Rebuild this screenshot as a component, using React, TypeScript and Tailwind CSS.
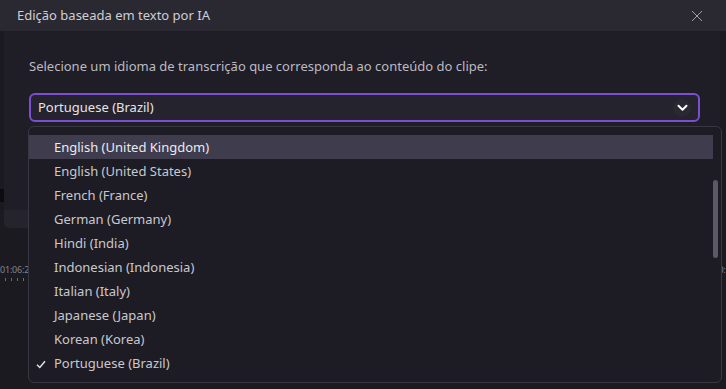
import React from 'react';

const LANGS = [
  'English (United Kingdom)',
  'English (United States)',
  'French (France)',
  'German (Germany)',
  'Hindi (India)',
  'Indonesian (Indonesia)',
  'Italian (Italy)',
  'Japanese (Japan)',
  'Korean (Korea)',
  'Portuguese (Brazil)',
];

const HOVERED = 'English (United Kingdom)';
const SELECTED = 'Portuguese (Brazil)';

const Ticks: React.FC = () => (
  <div className="flex gap-[5px] pl-[5px] mt-[4px]">
    {[0, 1, 2, 3].map((i) => (
      <span key={i} className="w-px h-[3px] bg-[#6d6b74]" />
    ))}
  </div>
);

const App: React.FC = () => {
  return (
    <div
      className="relative w-[726px] h-[389px] overflow-hidden bg-[#1b1a21] flex flex-col"
      style={{ fontFamily: '"Noto Sans", "Open Sans", sans-serif' }}
    >
      {/* Title bar */}
      <div className="h-[31px] shrink-0 flex items-center justify-between pl-[17px] pr-[23px] bg-[#2a2831]">
        <span className="text-[13px] text-[#cfced4] leading-none">Edição baseada em texto por IA</span>
        <svg width="12" height="12" viewBox="0 0 12 12" className="text-[#9f9ea6]">
          <path d="M1 1 L11 11 M11 1 L1 11" stroke="currentColor" strokeWidth="1" fill="none" />
        </svg>
      </div>

      {/* Dialog body */}
      <div className="h-[197px] shrink-0 flex">
        <div className="w-[4px] flex flex-col">
          <div className="h-[158px]" />
          <div className="h-[13px] bg-[#0c0b10]" />
        </div>
        <div className="flex-1 flex flex-col bg-[#1f1d26]">
          <div className="flex-1 pl-[25px] pr-[20px] pt-[26px]">
            <p className="text-[13px] leading-[18px] text-[#bcbbc2]">
              Selecione um idioma de transcrição que corresponda ao conteúdo do clipe:
            </p>
            <div className="mt-[18px] h-[29px] rounded-[6px] border-2 border-[#7b4fd3] bg-[#25232d] flex items-center justify-between pl-[7px] pr-[7px]">
              <span className="text-[13px] text-[#e6e5ea]">Portuguese (Brazil)</span>
              <span className="w-[18px] h-[18px] rounded-full bg-[#2a2832] flex items-center justify-center">
                <svg width="11" height="8" viewBox="0 0 11 8">
                  <path d="M1.5 1.8 L5.5 5.8 L9.5 1.8" stroke="#ffffff" strokeWidth="2" fill="none" strokeLinecap="round" strokeLinejoin="round" />
                </svg>
              </span>
            </div>
          </div>
          <div className="h-[18px] bg-[#25232c] rounded-b-[6px]" />
        </div>
        <div className="w-[6px]" />
      </div>

      {/* App timeline behind */}
      <div className="flex-1 flex justify-between pt-[37px]">
        <div>
          <div className="text-[9px] leading-none text-[#85848b] tracking-[-0.2px]">01:06:2</div>
          <Ticks />
        </div>
        <div>
          <div className="text-[9px] leading-none text-[#85848b]">0:</div>
        </div>
      </div>

      {/* Dropdown list */}
      <div className="absolute left-[28px] top-[126px] w-[694px] h-[257px] rounded-[6px] border border-[#393742] bg-[#1d1c24] pt-[8px] pr-[8px]">
        {LANGS.map((l) => {
          const hover = l === HOVERED;
          const sel = l === SELECTED;
          return (
            <div
              key={l}
              className={`h-[24px] flex items-center pt-[2px] text-[13px] ${hover ? 'bg-[#3f3c4d] text-[#ebeaef]' : 'text-[#c9c8ce]'}`}
            >
              <span className="w-[25px] flex justify-end pr-[8px]">
                {sel && (
                  <svg width="10" height="9" viewBox="0 0 10 9">
                    <path d="M1 4.8 L3.8 7.5 L9 1.2" stroke="#e6e5ea" strokeWidth="1.4" fill="none" />
                  </svg>
                )}
              </span>
              {l}
            </div>
          );
        })}
        <div className="absolute right-[3px] top-[53px] w-[5px] h-[78px] rounded-full bg-[#5b5963]" />
      </div>
    </div>
  );
};

export default App;
